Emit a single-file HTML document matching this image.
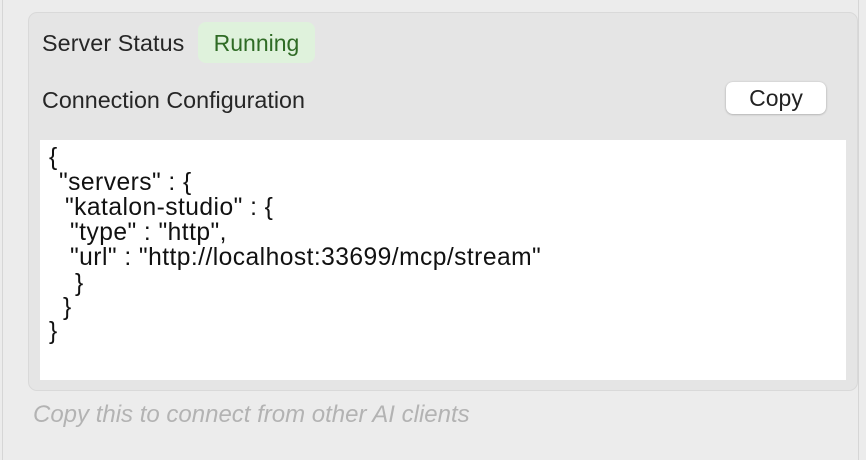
<!DOCTYPE html>
<html><head><meta charset="utf-8"><style>
html,body{margin:0;padding:0;width:866px;height:460px;overflow:hidden;background:#ececec;font-family:"Liberation Sans",Helvetica,Arial,sans-serif;}
.outer{position:absolute;left:2px;top:0;width:855px;height:460px;border-left:1px solid #d6d6d6;border-right:1px solid #d6d6d6;background:#ececec;}
.panel{position:absolute;left:28px;top:12px;width:828px;height:377px;background:#e5e5e5;border:1px solid #d9d9d9;border-radius:9px;}
.t{position:absolute;color:#262626;font-size:23.3px;line-height:30px;white-space:nowrap;}
.badge{position:absolute;left:198px;top:22px;width:117px;height:41px;background:#dff2dc;border-radius:8px;color:#2f6b25;font-size:23px;line-height:43px;text-align:center;}
.copy{position:absolute;left:726px;top:82px;width:100px;height:32px;background:#fff;border-radius:7px;box-shadow:0 0.5px 2px rgba(0,0,0,.3);font-size:23px;line-height:33px;text-align:center;color:#222;}
.code{position:absolute;left:40px;top:140px;width:806px;height:240px;background:#fff;}
.l{position:absolute;font-size:24.6px;line-height:24px;color:#111;white-space:nowrap;letter-spacing:0.45px;}
.foot{position:absolute;left:33px;top:400px;font-size:24px;line-height:30px;font-style:italic;color:#b3b3b3;white-space:nowrap;}
</style></head><body>
<div class="outer"></div>
<div class="panel"></div>
<div class="t" style="left:42px;top:28px;letter-spacing:0.1px">Server Status</div>
<div class="badge">Running</div>
<div class="t" style="left:42px;top:85px">Connection Configuration</div>
<div class="copy">Copy</div>
<div class="code"></div>
<div class="l" style="left:49px;top:146px">{</div>
<div class="l" style="left:59px;top:171px">"servers" : {</div>
<div class="l" style="left:65px;top:196px">"katalon-studio" : {</div>
<div class="l" style="left:70px;top:221px">"type" : "http",</div>
<div class="l" style="left:70px;top:246px">"url" : "http://localhost:33699/mcp/stream"</div>
<div class="l" style="left:75px;top:272px">}</div>
<div class="l" style="left:63px;top:296px">}</div>
<div class="l" style="left:49px;top:320px">}</div>
<div class="foot">Copy this to connect from other AI clients</div>
</body></html>
